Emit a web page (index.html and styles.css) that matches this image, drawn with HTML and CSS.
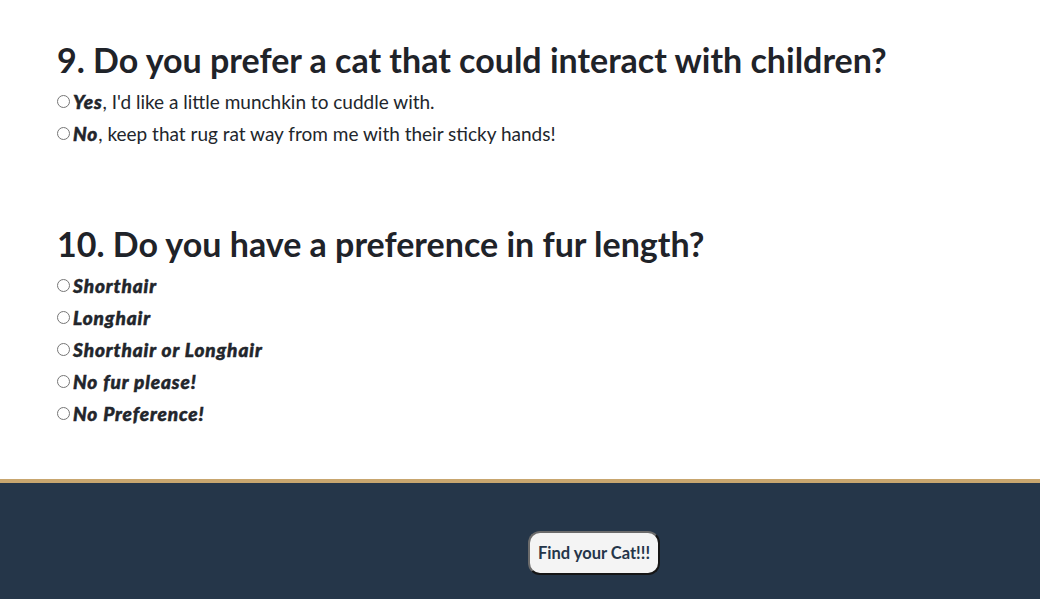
FILE: index.html
```html
<!DOCTYPE html>
<html>
<head>
<meta charset="utf-8">
<link rel="stylesheet" href="styles.css">
</head>
<body>
<main class="quiz">
  <section class="question">
    <h2 class="q-title">9. Do you prefer a cat that could interact with children?</h2>
    <label class="option"><input type="radio" name="q9"><span><b><i>Yes</i></b>, I'd like a little munchkin to cuddle with.</span></label>
    <label class="option"><input type="radio" name="q9"><span><b><i>No</i></b>, keep that rug rat way from me with their sticky hands!</span></label>
  </section>
  <section class="question">
    <h2 class="q-title">10. Do you have a preference in fur length?</h2>
    <label class="option"><input type="radio" name="q10"><span><b><i>Shorthair</i></b></span></label>
    <label class="option"><input type="radio" name="q10"><span><b><i>Longhair</i></b></span></label>
    <label class="option"><input type="radio" name="q10"><span><b><i>Shorthair or Longhair</i></b></span></label>
    <label class="option"><input type="radio" name="q10"><span><b><i>No fur please!</i></b></span></label>
    <label class="option"><input type="radio" name="q10"><span><b><i>No Preference!</i></b></span></label>
  </section>
</main>
<footer class="footer">
  <button class="submit" type="button">Find your Cat!!!</button>
</footer>
</body>
</html>
```
FILE: styles.css
```css
html, body {
  margin: 0;
  padding: 0;
  background: #ffffff;
  font-family: Lato, "Liberation Sans", sans-serif;
  color: #1f2329;
}
.quiz {
  padding: 39px 52px 50px;
  display: flex;
  flex-direction: column;
  gap: 74px;
}
.question {
  display: flex;
  flex-direction: column;
}
.q-title {
  margin: 0 0 4px 5px;
  font-size: 34px;
  font-weight: 700;
  line-height: 42px;
  color: #1f2329;
}
.option {
  display: flex;
  align-items: center;
  height: 32px;
  font-size: 19px;
  font-weight: 400;
  color: #22262c;
}
.option b {
  font-weight: 900;
  letter-spacing: 0.9px;
  -webkit-text-stroke: 0.5px #1f2329;
}
.option input {
  margin: 0 3px 0 5px;
  width: 13px;
  height: 13px;
}
.footer {
  border-top: 4px solid #c8a66f;
  background: #253649;
  display: flex;
  justify-content: center;
  padding: 48px 0 40px;
}
.submit {
  margin-left: 148px;
  height: 44px;
  padding: 0 8px;
  border-radius: 12px;
  border: 2px outset #6b6b6b;
  background: #f4f4f4;
  font-family: Lato, "Liberation Sans", sans-serif;
  font-weight: 700;
  font-size: 16.5px;
  color: #253649;
}
```
